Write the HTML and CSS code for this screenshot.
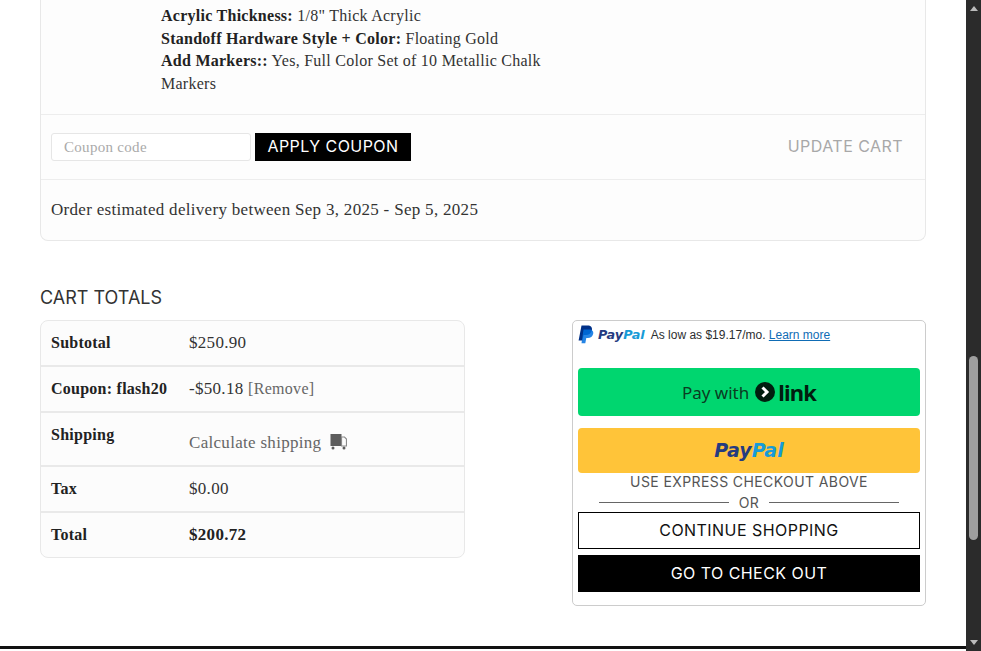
FILE: index.html
```html
<!DOCTYPE html>
<html lang="en">
<head>
    <meta charset="UTF-8">
    <meta name="viewport" content="width=device-width, initial-scale=1.0">
    <title>Cart</title>
    <link rel="stylesheet" href="styles.css">
</head>
<body>
    <div class="page">
        <main class="content">
            <div class="cart-card">
                <div class="item-meta">
                    <p><b>Acrylic Thickness:</b> 1/8" Thick Acrylic</p>
                    <p><b>Standoff Hardware Style + Color:</b> Floating Gold</p>
                    <p><b>Add Markers::</b> Yes, Full Color Set of 10 Metallic Chalk<br>Markers</p>
                </div>
                <div class="coupon-row">
                    <input class="coupon-input" type="text" placeholder="Coupon code">
                    <button class="btn-apply">APPLY COUPON</button>
                    <span class="update-cart">UPDATE CART</span>
                </div>
                <div class="delivery-row">Order estimated delivery between Sep 3, 2025 - Sep 5, 2025</div>
            </div>

            <div class="collaterals">
                <div class="totals">
                    <h2>CART TOTALS</h2>
                    <div class="totals-table">
                        <div class="totals-row">
                            <div class="label">Subtotal</div>
                            <div class="value">$250.90</div>
                        </div>
                        <div class="totals-row">
                            <div class="label">Coupon: flash20</div>
                            <div class="value">-$50.18 <a class="muted remove" href="#">[Remove]</a></div>
                        </div>
                        <div class="totals-row shipping">
                            <div class="label">Shipping</div>
                            <div class="value muted">
                                Calculate shipping
                                <svg class="truck" width="17" height="17" viewBox="0 0 17 17">
                                    <rect x="0.500" y="1" width="11" height="12" fill="#5d5d5d"/>
                                    <path d="M11.500 4h3l2 2v7h-5z" fill="none" stroke="#8a8a8a" stroke-width="1.2"/>
                                    <circle cx="3" cy="15" r="1.500" fill="#5d5d5d"/>
                                    <circle cx="14" cy="15" r="1.500" fill="#5d5d5d"/>
                                </svg>
                            </div>
                        </div>
                        <div class="totals-row">
                            <div class="label">Tax</div>
                            <div class="value">$0.00</div>
                        </div>
                        <div class="totals-row last">
                            <div class="label">Total</div>
                            <div class="value"><b>$200.72</b></div>
                        </div>
                    </div>
                </div>

                <div class="checkout-box">
                    <div class="paylater">
                        <svg class="pp-mark" width="16" height="19" viewBox="0 0 16 19">
                            <path d="M3.500 0.500h6c3.400 0 5 2 4.400 4.800-.6 3-3 4.700-6 4.700H5.600L4.500 15.500H0.600z" fill="#003087"/>
                            <path d="M5.500 4.500h5.700c2.800 0 4.500 1.600 4 4.300-.5 2.800-2.700 4.200-5.300 4.200H8.300l-1 5.200H3.500z" fill="#0070e0" opacity="0.85"/>
                        </svg>
                        <span class="pp-word small"><span class="pp-pay">Pay</span><span class="pp-pal">Pal</span></span>
                        <span class="paylater-text">As low as $19.17/mo. <a href="#">Learn more</a></span>
                    </div>
                    <button class="btn-link">
                        Pay with
                        <svg class="link-mark" width="20" height="20" viewBox="0 0 20 20">
                            <circle cx="10" cy="10" r="10" fill="#011e0f"/>
                            <path d="M7.500 5.500L12 10l-4.500 4.500" fill="none" stroke="#fff" stroke-width="3"/>
                        </svg>
                        <span class="link-word">link</span>
                    </button>
                    <button class="btn-paypal">
                        <span class="pp-word"><span class="pp-pay">Pay</span><span class="pp-pal">Pal</span></span>
                    </button>
                    <div class="express-note">USE EXPRESS CHECKOUT ABOVE</div>
                    <div class="or-line"><span>OR</span></div>
                    <a class="btn-continue" href="#">CONTINUE SHOPPING</a>
                    <a class="btn-checkout" href="#">GO TO CHECK OUT</a>
                </div>
            </div>

            <footer class="footer"></footer>
        </main>

        <div class="scrollbar">
            <span class="arrow-up"></span>
            <span class="thumb"></span>
            <span class="arrow-down"></span>
        </div>
    </div>
</body>
</html>
```

FILE: styles.css
```css
body {
    margin: 0;
    padding: 0;
    background: #fff;
    color: #333;
    font-family: "Liberation Serif", serif;
    font-size: 17px;
    letter-spacing: 0.3px;
}
.page {
    display: flex;
    height: 651px;
    overflow: hidden;
}
.content {
    flex: 1;
    padding: 0 40px;
    min-width: 0;
}

/* cart card, its top is scrolled away */
.cart-card {
    background: #fdfdfd;
    border: 1px solid #e8e8e8;
    border-top: none;
    border-radius: 0 0 8px 8px;
}
.item-meta {
    width: 392px;
    margin-left: 120px;
    padding: 5px 0 18px;
    font-size: 16px;
    letter-spacing: 0.26px;
    line-height: 22.7px;
}
.item-meta p {
    margin: 0;
}
.item-meta b, .label, .value b {
    color: #222;
}
.coupon-row {
    display: flex;
    align-items: center;
    height: 64px;
    padding: 0 22px 0 10px;
    border-top: 1px solid #ededed;
    border-bottom: 1px solid #ededed;
}
.coupon-input {
    box-sizing: border-box;
    width: 200px;
    height: 28px;
    margin-right: 4px;
    padding: 1px 12px 0;
    background: #fff;
    border: 1px solid #e6e6e6;
    border-radius: 3px;
    font-family: "Liberation Serif", serif;
    font-size: 15px;
    letter-spacing: 0.3px;
}
.coupon-input::placeholder {
    color: #aaa;
}
.btn-apply {
    width: 156px;
    height: 28px;
    padding: 0 0 2px;
    background: #000;
    border: none;
    color: #fff;
    font-family: Inter, sans-serif;
    font-size: 16px;
    letter-spacing: 0.45px;
}
.update-cart {
    margin-left: auto;
    padding-bottom: 2px;
    color: #a8a8a8;
    font-family: Inter, sans-serif;
    font-size: 16px;
    letter-spacing: 0.45px;
}
.delivery-row {
    padding: 19px 10px;
    line-height: 22px;
}

/* totals */
.collaterals {
    display: flex;
    justify-content: space-between;
    align-items: flex-start;
    margin-top: 46px;
}
.totals {
    width: 425px;
}
.totals h2 {
    margin: 0 0 12px;
    padding-top: 1px;
    color: #333;
    font-family: Inter, sans-serif;
    font-size: 18px;
    font-weight: 400;
    line-height: 20px;
    letter-spacing: 0;
}
.totals-table {
    background: #fcfcfc;
    border: 1px solid #e8e8e8;
    border-radius: 8px;
}
.totals-row {
    display: flex;
    align-items: center;
    height: 44px;
    padding: 0 10px;
    border-bottom: 2px solid #e9e9e9;
}
.totals-row.shipping {
    height: 52px;
}
.totals-row.last {
    height: 44px;
    border-bottom: none;
}
.label {
    width: 138px;
    font-size: 16px;
    font-weight: bold;
    letter-spacing: 0.25px;
}
.shipping .label {
    align-self: flex-start;
    margin-top: 13px;
}
.shipping .value {
    margin-top: 8px;
}
.muted {
    color: #666;
    text-decoration: none;
}
.remove {
    font-size: 16px;
}
.truck {
    margin-left: 4px;
    vertical-align: -2px;
}

/* checkout box */
.checkout-box {
    box-sizing: border-box;
    width: 354px;
    height: 286px;
    margin-top: 33px;
    padding: 0 5px;
    background: #fff;
    border: 1px solid #ccc;
    border-radius: 5px;
    text-align: center;
}
.paylater {
    display: flex;
    align-items: center;
    height: 47px;
    padding-bottom: 19px;
    box-sizing: border-box;
    font-family: "Liberation Sans", sans-serif;
    font-size: 12px;
    letter-spacing: 0;
    color: #2c2e2f;
}
.pp-mark {
    margin-right: 4px;
}
.paylater-text {
    margin-left: 6px;
}
.paylater-text a {
    color: #0f6cb5;
}
.pp-word {
    font-family: "DejaVu Sans", sans-serif;
    font-size: 19px;
    font-style: italic;
    font-weight: bold;
    letter-spacing: 0;
}
.pp-word.small {
    font-size: 12.800px;
}
.pp-pay {
    color: #253b80;
}
.pp-pal {
    color: #179bd7;
}
.btn-link, .btn-paypal {
    display: flex;
    align-items: center;
    justify-content: center;
    width: 342px;
    border: none;
    border-radius: 4px;
    padding: 0;
}
.btn-link {
    height: 48px;
    padding-top: 2px;
    background: #00d66f;
    color: #0b3b22;
    font-family: "Noto Sans", sans-serif;
    font-size: 17px;
    letter-spacing: 0;
}
.link-mark {
    margin: -2px 3px 0 6px;
}
.link-word {
    margin-top: -2px;
    color: #011e0f;
    font-size: 22px;
    font-weight: 700;
    line-height: 22px;
    letter-spacing: -0.8px;
}
.btn-paypal {
    height: 45px;
    margin-top: 12px;
    background: #ffc439;
}
.express-note {
    height: 18px;
    color: #555;
    font-family: Inter, sans-serif;
    font-size: 14px;
    line-height: 18px;
    letter-spacing: 0.4px;
}
.or-line {
    display: flex;
    align-items: center;
    justify-content: center;
    gap: 10px;
    box-sizing: border-box;
    height: 21px;
    padding-top: 2px;
    color: #555;
    font-family: Inter, sans-serif;
    font-size: 14px;
    letter-spacing: 0.4px;
}
.or-line::before, .or-line::after {
    content: "";
    width: 130px;
    border-top: 1px solid #666;
}
.btn-continue, .btn-checkout {
    display: block;
    box-sizing: border-box;
    height: 37px;
    font-family: Inter, sans-serif;
    font-size: 16px;
    line-height: 35px;
    letter-spacing: 0.45px;
    text-decoration: none;
}
.btn-continue {
    background: #fff;
    border: 1px solid #000;
    color: #111;
}
.btn-checkout {
    margin-top: 6px;
    background: #000;
    border: 1px solid #000;
    color: #fff;
}
.footer {
    margin: 40px -40px 0;
    height: 3px;
    background: #111;
}

/* window scrollbar */
.scrollbar {
    position: relative;
    display: flex;
    flex-direction: column;
    justify-content: space-between;
    align-items: center;
    width: 15px;
    padding: 6px 0;
    box-sizing: border-box;
    background: #2b2b2b;
}
.arrow-up {
    border: 4px solid transparent;
    border-top: none;
    border-bottom: 5px solid #bbb;
}
.arrow-down {
    border: 4px solid transparent;
    border-bottom: none;
    border-top: 5px solid #bbb;
}
.thumb {
    position: absolute;
    top: 356px;
    left: 3px;
    width: 9px;
    height: 184px;
    background: #9f9f9f;
    border-radius: 5px;
}
```
